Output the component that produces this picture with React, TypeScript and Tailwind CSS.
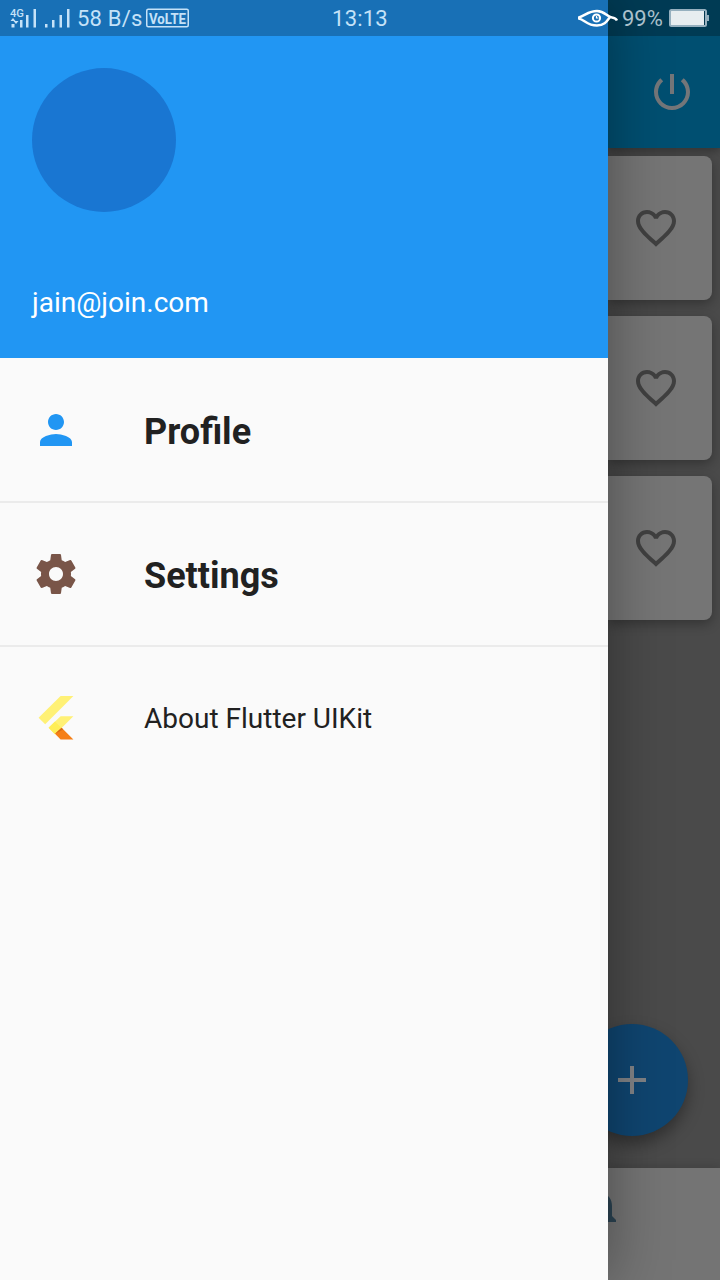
import type { ReactNode } from "react";

function Icon({ d, className, children }: { d?: string; className: string; children?: ReactNode }) {
  return (
    <svg viewBox="0 0 24 24" fill="currentColor" className={`size-12 shrink-0 ${className}`}>
      {d ? <path d={d} /> : children}
    </svg>
  );
}

const PERSON =
  "M12 12c2.21 0 4-1.79 4-4s-1.79-4-4-4-4 1.79-4 4 1.79 4 4 4zm0 2c-2.67 0-8 1.34-8 4v2h16v-2c0-2.66-5.33-4-8-4z";
const SETTINGS =
  "M19.43 12.98c.04-.32.07-.64.07-.98s-.03-.66-.07-.98l2.11-1.65c.19-.15.24-.42.12-.64l-2-3.46c-.12-.22-.39-.3-.61-.22l-2.49 1c-.52-.4-1.08-.73-1.69-.98l-.38-2.65C14.46 2.18 14.25 2 14 2h-4c-.25 0-.46.18-.49.42l-.38 2.65c-.61.25-1.17.59-1.69.98l-2.49-1c-.23-.09-.49 0-.61.22l-2 3.46c-.13.22-.07.49.12.64l2.11 1.65c-.04.32-.07.65-.07.98s.03.66.07.98l-2.11 1.65c-.19.15-.24.42-.12.64l2 3.46c.12.22.39.3.61.22l2.49-1c.52.4 1.08.73 1.69.98l.38 2.65c.03.24.24.42.49.42h4c.25 0 .46-.18.49-.42l.38-2.65c.61-.25 1.17-.59 1.69-.98l2.49 1c.23.09.49 0 .61-.22l2-3.46c.12-.22.07-.49-.12-.64l-2.11-1.65zM12 15.5c-1.93 0-3.5-1.57-3.5-3.5s1.57-3.5 3.5-3.5 3.5 1.57 3.5 3.5-1.57 3.5-3.5 3.5z";
const POWER =
  "M13 3h-2v10h2V3zm4.83 2.17l-1.42 1.42C17.99 7.86 19 9.81 19 12c0 3.87-3.13 7-7 7s-7-3.13-7-7c0-2.19 1.01-4.14 2.58-5.42L6.17 5.17C4.23 6.82 3 9.26 3 12c0 4.97 4.03 9 9 9s9-4.03 9-9c0-2.74-1.23-5.18-3.17-6.83z";
const HEART =
  "M16.5 3c-1.74 0-3.41.81-4.5 2.09C10.91 3.81 9.24 3 7.5 3 4.42 3 2 5.42 2 8.5c0 3.78 3.4 6.86 8.55 11.54L12 21.35l1.45-1.32C18.6 15.36 22 12.28 22 8.5 22 5.42 19.58 3 16.5 3zm-4.4 15.55l-.1.1-.1-.1C7.14 14.24 4 11.39 4 8.5 4 6.5 5.5 5 7.5 5c1.54 0 3.04.99 3.57 2.36h1.87C13.46 5.99 14.96 5 16.5 5c2 0 3.5 1.5 3.5 3.5 0 2.89-3.14 5.74-7.9 10.05z";
const BELL =
  "M12 22c1.1 0 2-.9 2-2h-4c0 1.1.89 2 2 2zm6-6v-5c0-3.07-1.64-5.64-4.5-6.32V4c0-.83-.67-1.5-1.5-1.5s-1.5.67-1.5 1.5v.68C7.63 5.36 6 7.92 6 11v5l-2 2v1h16v-1l-2-2z";
const PLUS = "M19 13h-6v6h-2v-6H5v-2h6V5h2v6h6v2z";

function StatusBar() {
  return (
    <header className="absolute inset-x-0 top-0 z-20 grid h-9 grid-cols-[1fr_auto_1fr] items-center bg-black/25 text-[22px] text-[#c5e2f8]">
      <div className="flex h-full items-center pl-[10px]">
        <svg viewBox="0 0 60 24" className="h-6 w-[60px] shrink-0" fill="currentColor">
          <text x="0" y="11" fontFamily="Roboto, sans-serif" fontSize="11" fontWeight="500" textLength="14" lengthAdjust="spacingAndGlyphs">4G</text>
          <path d="M1.500 18h3v3.500h-3zM3 12l2.500 3H.5zM6 18l-2.500-3h5zM10 14h2.500v7.500H10zM16 9h2.500v12.500H16zM23.500 3h2.500v18.500h-2.500zM35 18h2.500v3.500H35zM42 14h2.500v7.500H42zM49.500 9H52v12.500h-2.500zM57 3h2.500v18.500H57z" />
        </svg>
        <span className="ml-[7px] w-[65px] whitespace-nowrap tracking-[0.2px]">58 B/s</span>
        <svg viewBox="0 0 43 24" className="ml-[4px] h-6 w-[43px] shrink-0" fill="currentColor">
          <rect x=".75" y="3.250" width="41.500" height="17.500" rx="1.500" fill="none" stroke="currentColor" strokeWidth="1.500" />
          <text x="3" y="17.500" fontFamily="Roboto, sans-serif" fontSize="15.500" fontWeight="700" textLength="37" lengthAdjust="spacingAndGlyphs">VoLTE</text>
        </svg>
      </div>
      <span className="pt-px tracking-[0.2px]">13:13</span>
      <div className="flex items-center justify-end pr-[11px]">
        <svg viewBox="0 0 42 20" className="h-5 w-[42px]" fill="none" stroke="#fff" strokeWidth="2.500">
          <path d="M-1 10C7 8 10 3 19 3c8 0 10 6 15 6.500 3 .3 4 1 5 3M-1 10c8 1 9 7.500 20 7.500 8 0 10-4.500 13-8.500" />
          <circle cx="18.500" cy="10" r="3.600" strokeWidth="2" />
          <path d="M18.500 8v2h2" strokeWidth="1.200" />
        </svg>
        <span className="ml-[2px] w-[42px] text-[#abc0cb]">99%</span>
        <svg viewBox="0 0 40 18" className="ml-[5px] h-[18px] w-10">
          <rect x="1" y="1" width="36" height="16" rx="1.500" fill="#e7edf0" stroke="#96b0bf" strokeWidth="2" />
          <path d="M35.500 2v14" stroke="#05384f" />
          <path d="M38 6h2v6h-2z" fill="#96b0bf" />
        </svg>
      </div>
    </header>
  );
}

function Card() {
  return (
    <div className="flex h-36 items-center rounded-r-lg bg-[#757575] pl-6 shadow-[0_4px_12px_rgba(0,0,0,0.3)]">
      <Icon d={HEART} className="text-[#404040]" />
    </div>
  );
}

export default function App() {
  return (
    <div className="relative flex h-[1280px] w-[720px] overflow-hidden bg-[#4a4a4a] font-['Roboto',sans-serif]">
      <StatusBar />
      <aside className="z-10 flex w-[608px] shrink-0 flex-col bg-[#fafafa] text-[#212121] shadow-[0_0_56px_rgba(0,0,0,0.36)]">
        <div className="flex h-[358px] flex-col justify-between bg-[#2196f3] px-8 pt-[68px] pb-[39px]">
          <div className="size-36 rounded-full bg-[#1976d2]" />
          <span className="text-[28px] leading-[33px] text-white">jain@join.com</span>
        </div>
        <nav className="flex flex-col">
          <a className="flex h-36 items-center gap-16 px-8">
            <Icon d={PERSON} className="text-[#2196f3]" />
            <span className="pt-[3px] text-[36px] font-bold">Profile</span>
          </a>
          <a className="flex h-36 items-center gap-16 px-8 shadow-[0_-1px_0_#ebebeb,inset_0_1px_0_#ebebeb]">
            <Icon d={SETTINGS} className="text-[#795548]" />
            <span className="pt-[3px] text-[36px] font-bold">Settings</span>
          </a>
          <a className="flex h-36 items-center gap-16 px-8 shadow-[0_-1px_0_#ebebeb,inset_0_1px_0_#ebebeb]">
            <Icon className="">
              <path d="M14.300 1H20.700L6.600 15.100 3.300 11.900z" fill="#fff176" />
              <path d="M14.300 11.100H20.700L14.800 17 11.500 20.100 8.300 16.900z" fill="#fff176" />
              <path d="M11.500 13.700L14.800 17 11.500 20.100 8.300 16.900z" fill="#ffee58" />
              <path d="M14.800 16.900L20.700 22.700H14.300L11.500 19.900z" fill="#f57f17" />
              <path d="M11.500 19.900l3.300-3 .8.800z" fill="#d66b16" />
            </Icon>
            <span className="pt-[2px] text-[28px]">About Flutter UIKit</span>
          </a>
        </nav>
      </aside>
      <main className="flex w-28 flex-col">
        <div className="flex h-[148px] justify-end bg-[#004f71] pt-[68px] pr-6 shadow-[0_3px_8px_rgba(0,0,0,0.3)]">
          <Icon d={POWER} className="text-[#747679]" />
        </div>
        <section className="flex grow flex-col gap-4 pt-2 pr-2">
          <Card />
          <Card />
          <Card />
        </section>
        <button className="mb-8 -ml-8 flex size-28 items-center justify-center rounded-full bg-[#0f4570] shadow-[0_8px_16px_rgba(0,0,0,0.35)]">
          <Icon d={PLUS} className="text-[#808285]" />
        </button>
        <footer className="flex h-28 bg-[#747474] pt-4 shadow-[0_-2px_8px_rgba(0,0,0,0.12)]">
          <Icon d={BELL} className="-ml-8 text-[#2b4352]" />
        </footer>
      </main>
    </div>
  );
}
